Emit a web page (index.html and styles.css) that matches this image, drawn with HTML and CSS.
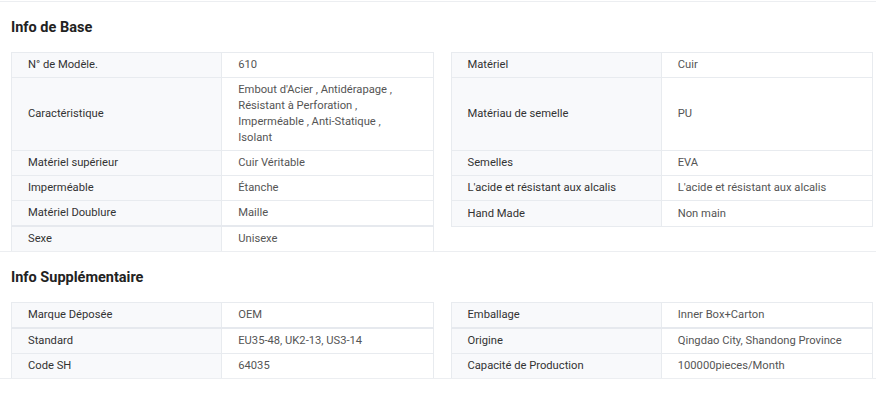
FILE: index.html
```html
<!DOCTYPE html>
<html lang="fr">
<head>
<meta charset="utf-8">
<title>Info de Base</title>
<link rel="stylesheet" href="styles.css">
</head>
<body>
<div class="page">
  <section class="block">
    <h2 class="block-title">Info de Base</h2>
    <div class="grid">
      <div class="item"><div class="lbl">N° de Modèle.</div><div class="val">610</div></div>
      <div class="item"><div class="lbl">Matériel</div><div class="val">Cuir</div></div>
      <div class="item"><div class="lbl">Caractéristique</div><div class="val">Embout d'Acier , Antidérapage , Résistant à Perforation , Imperméable , Anti-Statique , Isolant</div></div>
      <div class="item"><div class="lbl">Matériau de semelle</div><div class="val">PU</div></div>
      <div class="item"><div class="lbl">Matériel supérieur</div><div class="val">Cuir Véritable</div></div>
      <div class="item"><div class="lbl">Semelles</div><div class="val">EVA</div></div>
      <div class="item"><div class="lbl">Imperméable</div><div class="val">Étanche</div></div>
      <div class="item"><div class="lbl">L'acide et résistant aux alcalis</div><div class="val">L'acide et résistant aux alcalis</div></div>
      <div class="item thick"><div class="lbl">Matériel Doublure</div><div class="val">Maille</div></div>
      <div class="item"><div class="lbl">Hand Made</div><div class="val">Non main</div></div>
      <div class="item last"><div class="lbl">Sexe</div><div class="val">Unisexe</div></div>
    </div>
  </section>
  <section class="block">
    <h2 class="block-title">Info Supplémentaire</h2>
    <div class="grid">
      <div class="item thick"><div class="lbl">Marque Déposée</div><div class="val">OEM</div></div>
      <div class="item thick"><div class="lbl">Emballage</div><div class="val">Inner Box+Carton</div></div>
      <div class="item"><div class="lbl">Standard</div><div class="val">EU35-48, UK2-13, US3-14</div></div>
      <div class="item"><div class="lbl">Origine</div><div class="val">Qingdao City, Shandong Province</div></div>
      <div class="item last"><div class="lbl">Code SH</div><div class="val">64035</div></div>
      <div class="item last"><div class="lbl">Capacité de Production</div><div class="val">100000pieces/Month</div></div>
    </div>
  </section>
</div>
</body>
</html>
```
FILE: styles.css
```css
* { box-sizing: border-box; }
html, body { margin: 0; padding: 0; background: #fff; }
body {
  font-family: Roboto, "Liberation Sans", Arial, sans-serif;
  font-size: 11.2px;
  color: #333;
}
.page {
  padding-top: 1px;
}
.block {
  border-top: 1px solid #eceef1;
  padding: 16px 3px 0 11px;
}
.block:last-child {
  border-bottom: 1px solid #eceef1;
}
.block-title {
  margin: 0 0 14px 0;
  font-size: 14.5px;
  line-height: 20px;
  font-weight: 700;
  color: #222;
}
.grid {
  display: grid;
  grid-template-columns: 1fr 1fr;
  column-gap: 17px;
  align-items: stretch;
}
.item {
  display: grid;
  grid-template-columns: 1fr 1fr;
  border-left: 1px solid #e8ebef;
  border-right: 1px solid #e8ebef;
  border-bottom: 1px solid #e8ebef;
}
.item:nth-child(1), .item:nth-child(2) {
  border-top: 1px solid #e8ebef;
}
.item.thick { border-bottom: 2px solid #e6e9ee; }
.item.last { border-bottom: 0; }
.lbl, .val {
  display: flex;
  align-items: center;
  padding: 4px 16px;
  line-height: 16px;
  min-height: 24px;
}
.lbl {
  background: #f8f9fb;
  border-right: 1px solid #e8ebef;
  color: #333;
}
.val {
  background: #fff;
  color: #555;
  padding-right: 22px;
}
```
